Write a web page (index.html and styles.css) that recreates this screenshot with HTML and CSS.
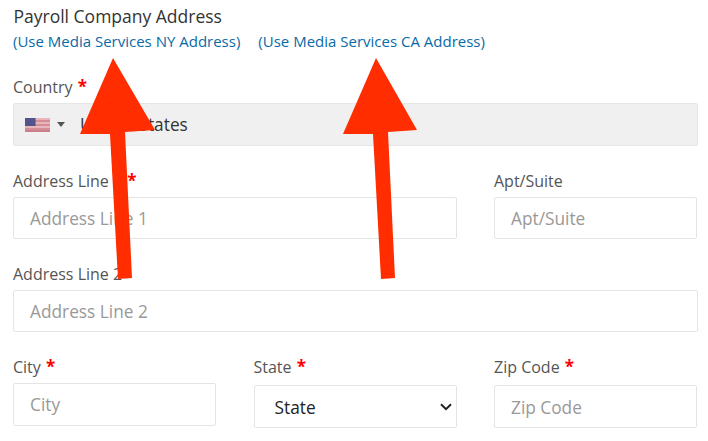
FILE: index.html
```html
<!DOCTYPE html>
<html lang="en">
<head>
<meta charset="utf-8">
<title>Payroll Company Address</title>
<link rel="stylesheet" href="styles.css">
</head>
<body>
<main class="form">
  <h2 class="title">Payroll Company Address</h2>
  <p class="links"><a href="#">(Use Media Services NY Address)</a><a href="#">(Use Media Services CA Address)</a></p>

  <div class="field country">
    <label class="label">Country <span class="req">*</span></label>
    <div class="phone-select">
      <svg class="flag" width="25" height="14" viewBox="0 0 26 14" preserveAspectRatio="none">
        <rect width="26" height="14" fill="#e9b4ba"/>
        <rect y="2" width="26" height="2" fill="#d38d97"/>
        <rect y="6" width="26" height="2" fill="#d38d97"/>
        <rect y="10" width="26" height="2" fill="#d38d97"/>
        <rect y="12" width="26" height="2" fill="#c9808b"/>
        <rect width="11" height="8" fill="#54548c"/>
      </svg>
      <span class="caret"></span>
      <span class="country-name">United States</span>
    </div>
  </div>

  <div class="grid row-address">
    <div class="field span-2">
      <label class="label">Address Line 1 <span class="req">*</span></label>
      <input class="input" placeholder="Address Line 1">
    </div>
    <div class="field">
      <label class="label">Apt/Suite</label>
      <input class="input" placeholder="Apt/Suite">
    </div>
  </div>

  <div class="field row-line2">
    <label class="label">Address Line 2</label>
    <input class="input" placeholder="Address Line 2">
  </div>

  <div class="grid row-city">
    <div class="field">
      <label class="label">City <span class="req">*</span></label>
      <input class="input tall" placeholder="City">
    </div>
    <div class="field">
      <label class="label label-loose">State <span class="req">*</span></label>
      <div class="select">State<svg class="chev" width="12" height="8" viewBox="0 0 12 8"><path d="M1 1.2 6 6.2 11 1.2" fill="none" stroke="#222" stroke-width="2"/></svg></div>
    </div>
    <div class="field">
      <label class="label label-loose">Zip Code <span class="req">*</span></label>
      <input class="input tall low" placeholder="Zip Code">
    </div>
  </div>
</main>

<svg class="arrows" width="708" height="441" viewBox="0 0 708 441">
  <path fill="#ff2d00" d="M113 58 155 130 125 132 132 278 118 279 110 134 80 134Z"/>
  <path fill="#ff2d00" d="M376 58 417 130 388 132 395 278 381 279 373 134 343 134Z"/>
</svg>
</body>
</html>
```

FILE: styles.css
```css
* { box-sizing: border-box; }
html, body { margin: 0; padding: 0; }
body {
  width: 708px;
  height: 441px;
  overflow: hidden;
  position: relative;
  background: #fff;
  font-family: "Open Sans", sans-serif;
  color: #555;
}
.form {
  width: 685px;
  margin-left: 13px;
  padding-top: 5px;
}
.title {
  margin: 0;
  padding-left: 0.5px;
  font-size: 17.5px;
  font-weight: 400;
  line-height: 22px;
  color: #333;
}
.links {
  margin: 4px 0 0;
  display: flex;
  gap: 18px;
  font-size: 15px;
  line-height: 21px;
}
.links a {
  color: #0a6aa8;
  text-decoration: none;
}
.field { display: flex; flex-direction: column; }
.label {
  display: block;
  font-size: 16px;
  line-height: 22px;
  margin-bottom: 5px;
}
.label-loose { margin-bottom: 7px; }
.req { color: #f00; font-weight: 700; font-size: 17px; margin-left: 1px; }
.country { margin-top: 24px; }
.phone-select {
  height: 43px;
  display: flex;
  align-items: center;
  padding-left: 11px;
  background: #f0f0f0;
  border: 1px solid #e6e6e6;
  border-radius: 2px;
  color: #333;
  font-size: 17.3px;
}
.flag { flex: none; }
.caret {
  width: 0;
  height: 0;
  margin-left: 7px;
  border-left: 4px solid transparent;
  border-right: 4px solid transparent;
  border-top: 5px solid #555;
}
.country-name { margin-left: 15px; }
.grid {
  display: grid;
  grid-template-columns: repeat(3, 1fr);
  column-gap: 37.5px;
  padding-right: 1px;
}
.span-2 { grid-column: span 2; }
.row-address { margin-top: 24px; }
.row-line2 { margin-top: 24px; }
.row-city { margin-top: 24px; }
.input {
  width: 100%;
  height: 42px;
  padding: 0 16px;
  border: 1px solid #e4e4e4;
  border-radius: 2px;
  background: #fff;
  font: 17.3px "Open Sans", sans-serif;
  color: #333;
  outline: none;
}
.input.tall { height: 43px; }
.input.low { padding-top: 2px; }
.input::placeholder { color: #999; opacity: 1; }
.select {
  height: 43px;
  display: flex;
  align-items: center;
  justify-content: space-between;
  padding: 2px 4px 0 20px;
  border: 1px solid #e4e4e4;
  border-radius: 2px;
  background: #fff;
  font-size: 17.3px;
  color: #222;
}
.chev { flex: none; margin-bottom: 2px; }
.arrows {
  position: absolute;
  left: 0;
  top: 0;
  pointer-events: none;
}
```
